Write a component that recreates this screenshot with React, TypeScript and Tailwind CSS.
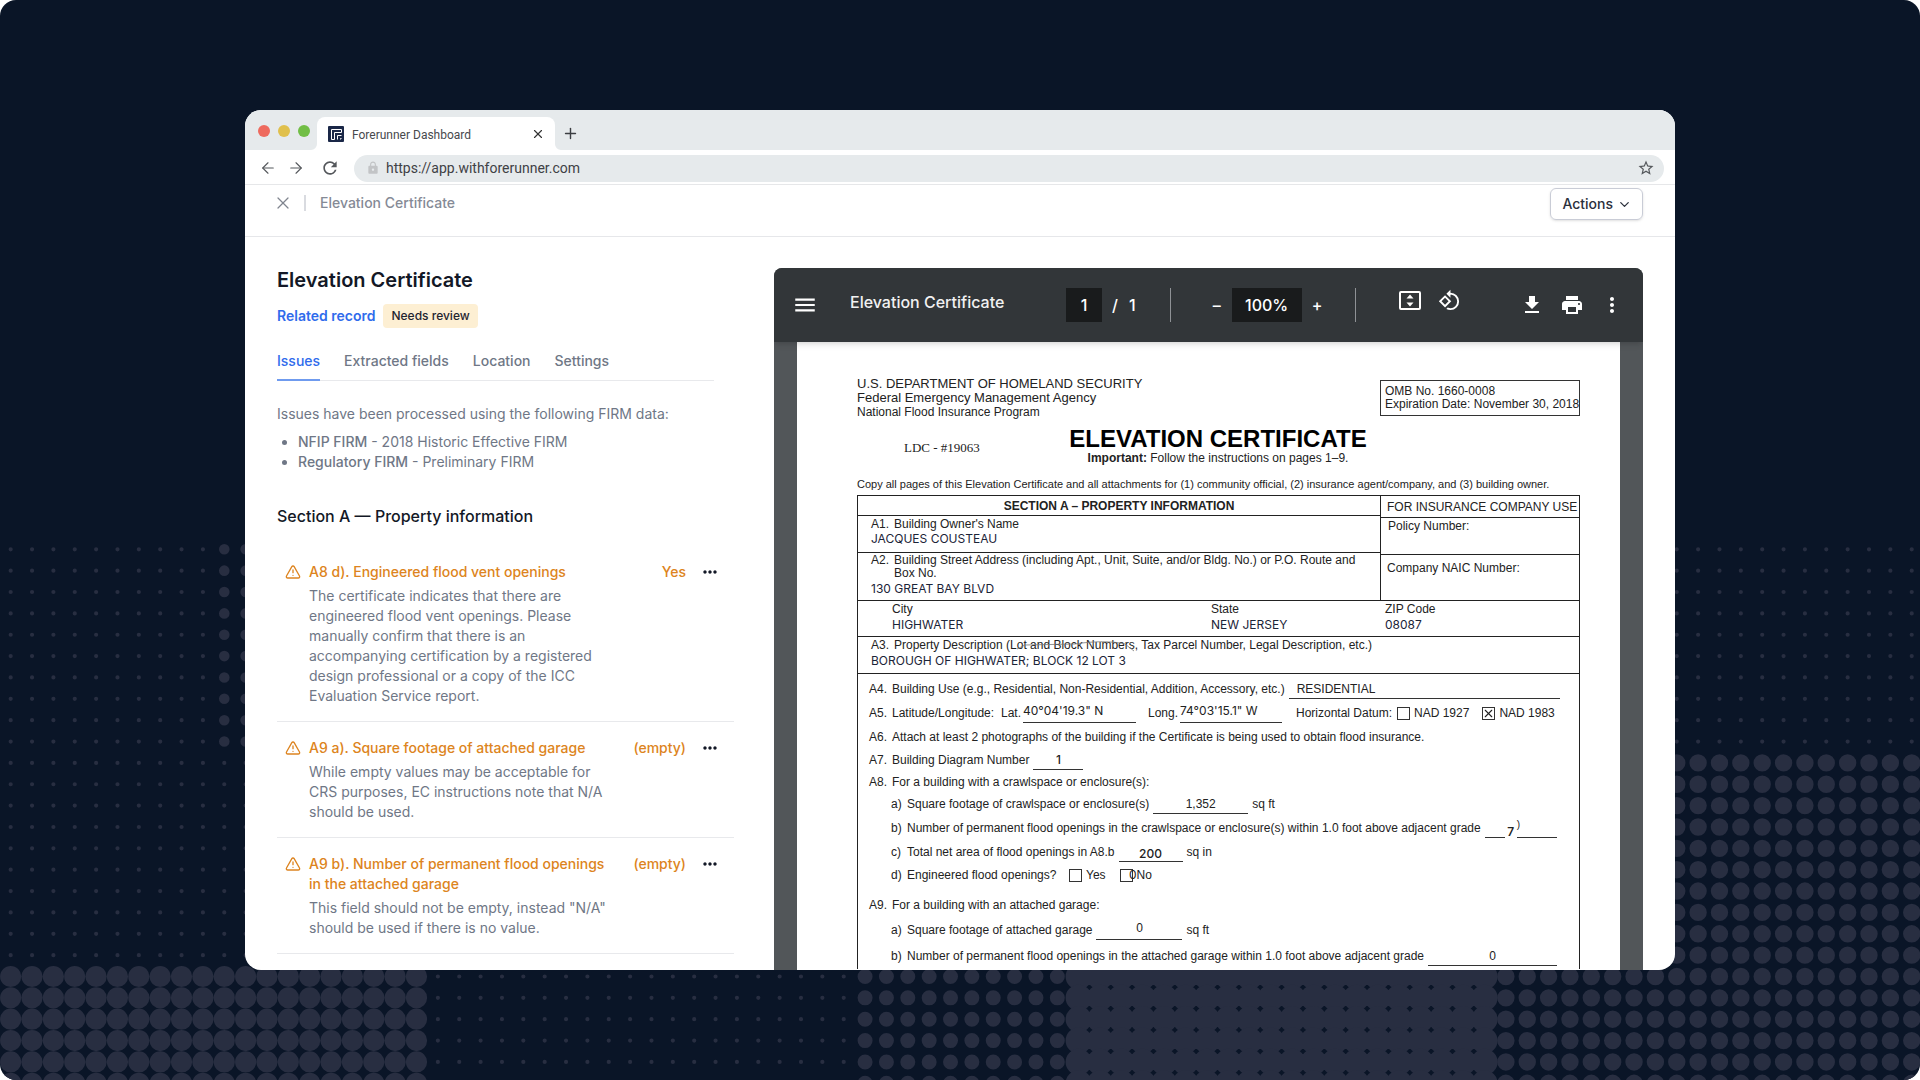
import { useState } from 'react'
import type { ReactNode } from 'react'
import { ArrowLeft, ArrowRight, ChevronDown, Plus, TriangleAlert, X } from 'lucide-react'
import { MdFileDownload, MdLock, MdMenu, MdMoreHoriz, MdMoreVert, MdPrint, MdRefresh, MdRotate90DegreesCcw, MdStarBorder } from 'react-icons/md'

const tabs = ['Issues', 'Extracted fields', 'Location', 'Settings']

const issues = [
  {
    id: 1,
    title: 'A8 d). Engineered flood vent openings',
    value: 'Yes',
    text: 'The certificate indicates that there are engineered flood vent openings. Please manually confirm that there is an accompanying certification by a registered design professional or a copy of the ICC Evaluation Service report.',
  },
  {
    id: 2,
    title: 'A9 a). Square footage of attached garage',
    value: '(empty)',
    text: 'While empty values may be acceptable for CRS purposes, EC instructions note that N/A should be used.',
  },
  {
    id: 3,
    title: 'A9 b). Number of permanent flood openings in the attached garage',
    value: '(empty)',
    text: 'This field should not be empty, instead "N/A" should be used if there is no value.',
  },
]

/* Distance between two dots of the backdrop */
const STEP = 21.36

// columns and rows are [first, count]
const dotZones = [
  { cols: [0, 10], rows: [0, 20], r: 2.1 },
  { cols: [10, 10], rows: [0, 10], r: 5.3 },
  { cols: [10, 10], rows: [10, 10], r: 2.1 },
  { cols: [70, 20], rows: [0, 10], r: 2.1 },
  { cols: [70, 20], rows: [10, 10], r: 8.7 },
  { cols: [0, 20], rows: [20, 6], r: 10.6 },
  { cols: [20, 20], rows: [20, 6], r: 2.1 },
  { cols: [40, 10], rows: [20, 6], r: 7.5 },
  { cols: [50, 20], rows: [20, 6], r: 13.1 },
  { cols: [70, 20], rows: [20, 6], r: 8.7 },
]

const Backdrop = () => (
  <svg className="absolute inset-0 h-full w-full" aria-hidden="true">
    {dotZones.map((zone, i) => (
      <g key={i} stroke="#282e41" strokeWidth={zone.r * 2} strokeLinecap="round" strokeDasharray={`0 ${STEP}`}>
        {Array.from({ length: zone.rows[1] }, (_, row) => {
          const x = STEP / 2 + zone.cols[0] * STEP
          const y = 549.3 + (zone.rows[0] + row) * STEP
          return <line key={row} x1={x} y1={y} x2={x + (zone.cols[1] - 1) * STEP + 1} y2={y} />
        })}
      </g>
    ))}
  </svg>
)

const Logo = () => (
  <svg viewBox="0 0 16 16" className="size-4" fill="none" stroke="#fff" aria-hidden="true">
    <rect width="16" height="16" rx="1" fill="#1a2747" stroke="none" />
    <path d="M6.5 13.5h-3v-10h10v3h-7v7" />
    <path d="M9.5 13.5v-4h4M12.5 13.5v-1h1" />
  </svg>
)

const FitPage = () => (
  <svg viewBox="0 0 22 19" className="h-[19px] w-[22px]" aria-hidden="true">
    <rect x="1" y="1" width="20" height="17" rx="1" fill="none" stroke="#fff" strokeWidth="2" />
    <path d="M11 3.5l3.5 4h-7zM11 15.5l3.5-4h-7z" fill="#fff" />
  </svg>
)

const BrowserBar = () => (
  <header className="font-[Roboto,sans-serif]">
    <div className="flex h-10 items-end bg-[#e6eaec] pl-[13px]">
      <div className="flex gap-2 pb-[13px]">
        <span className="size-3 rounded-full bg-[#ee6a5e]" />
        <span className="size-3 rounded-full bg-[#e0c04c]" />
        <span className="size-3 rounded-full bg-[#71be45]" />
      </div>
      <div className="relative ml-[7px] flex h-[33px] w-[238px] items-center rounded-t-lg bg-white pl-[11px] pr-[10px] text-xs text-[#47494d]">
        <svg viewBox="0 0 6 6" className="absolute -left-1.5 bottom-0 size-1.5" aria-hidden="true">
          <path d="M6 0v6H0a6 6 0 0 0 6-6z" fill="#fff" />
        </svg>
        <svg viewBox="0 0 6 6" className="absolute -right-1.5 bottom-0 size-1.5" aria-hidden="true">
          <path d="M0 0v6h6a6 6 0 0 1-6-6z" fill="#fff" />
        </svg>
        <Logo />
        <span className="ml-2 flex-1 pt-0.5">Forerunner Dashboard</span>
        <button aria-label="Close tab">
          <X className="size-[14px] text-[#333]" />
        </button>
      </div>
      <button className="mb-2 ml-[7px]" aria-label="New tab">
        <Plus className="size-[17px] text-[#3c3e42]" />
      </button>
    </div>
    <div className="flex h-[35px] items-center border-b border-[#e6e7e9] pl-[14px] pr-[11px] pt-0.5 text-[#55585c]">
      <button aria-label="Back"><ArrowLeft className="size-[18px]" strokeWidth={1.5} /></button>
      <button aria-label="Forward" className="ml-[10px]"><ArrowRight className="size-[18px]" strokeWidth={1.5} /></button>
      <button aria-label="Reload" className="ml-[15px]"><MdRefresh className="size-5" /></button>
      <div className="ml-[14px] flex h-[27px] flex-1 items-center rounded-full bg-[#e6eaec] pl-3 pr-[9px]">
        <MdLock className="size-[14px] text-[#c2c4c6]" />
        <input aria-label="Address" className="ml-1.5 flex-1 text-sm text-[#3f4145] outline-none" defaultValue="https://app.withforerunner.com" />
        <button aria-label="Bookmark"><MdStarBorder className="size-[18px]" /></button>
      </div>
    </div>
  </header>
)

const PageHeader = () => (
  <div className="flex h-[52px] items-start justify-between border-b border-[#e6e7ea] pl-[28px] pr-8 pt-[3px]">
    <div className="flex h-[30px] items-center">
      <button aria-label="Close"><X className="size-5 text-[#80858f]" strokeWidth={1.5} /></button>
      <span className="ml-[11px] h-4 w-0.5 bg-[#d9dbe0]" />
      <span className="ml-[14px] text-sm font-medium text-[#858a96]">Elevation Certificate</span>
    </div>
    <button className="flex h-8 items-center gap-1 rounded-md border border-[#c9ccd6] pl-[11px] pr-[10px] text-sm font-medium text-[#2b303c] shadow-sm">
      Actions
      <ChevronDown className="size-[15px]" />
    </button>
  </div>
)

const IssuesPanel = () => {
  const [activeTab, setActiveTab] = useState('Issues')

  return (
    <section className="w-[457px] shrink-0 pt-[29px] text-sm text-[#6f7786]">
      <h1 className="text-xl font-semibold leading-7 text-[#131826]">Elevation Certificate</h1>
      <div className="mt-[10px] flex items-center gap-2">
        <a href="#record" className="font-semibold text-[#2f6bec]">Related record</a>
        <span className="flex h-6 items-center rounded bg-[#fdefd3] px-2 text-xs font-medium text-[#1f2430]">Needs review</span>
      </div>
      <div role="tablist" className="mr-5 mt-[23px] flex gap-6 border-b border-[#e8e9ec]">
        {tabs.map((tab) => (
          <button
            key={tab}
            role="tab"
            aria-selected={tab === activeTab}
            onClick={() => setActiveTab(tab)}
            className={tab === activeTab ? '-mb-px border-b-2 border-[#6f9bef] pb-2 font-medium text-[#2f6bec]' : '-mb-px border-b-2 border-transparent pb-2 font-medium'}
          >
            {tab}
          </button>
        ))}
      </div>
      <p className="mt-[23px]">Issues have been processed using the following FIRM data:</p>
      <ul className="mt-2 list-disc pl-[21px]">
        <li><b className="font-medium">NFIP FIRM</b> - 2018 Historic Effective FIRM</li>
        <li><b className="font-medium">Regulatory FIRM</b> - Preliminary FIRM</li>
      </ul>
      <h2 className="mt-8 text-base font-medium text-[#131826]">Section A — Property information</h2>
      <ul className="mt-[18px]">
        {issues.map(({ id, title, value, text }) => (
          <li key={id} className="flex items-start border-b border-[#e8e9ec] pb-[15px] pl-2 pt-4">
            <TriangleAlert className="mt-0.5 size-4 shrink-0 text-[#dd8420]" />
            <div className="ml-2 w-[304px]">
              <h3 className="font-medium text-[#dd8420]">{title}</h3>
              <p className="mt-1">{text}</p>
            </div>
            <span className="ml-auto font-medium text-[#dd8420]">{value}</span>
            <button className="mx-[14px] text-[#131826]" aria-label="Issue actions">
              <MdMoreHoriz className="size-5" />
            </button>
          </li>
        ))}
      </ul>
    </section>
  )
}

const ViewerToolbar = () => (
  <div className="relative flex h-[74px] items-center bg-[#323639] pl-[18px] pr-[19px] text-base font-medium text-white shadow-md">
    <div className="flex w-[274px] items-center">
      <button aria-label="Menu"><MdMenu className="size-[26px]" /></button>
      <h2 className="ml-8 pb-1.5 text-[#f1f1f1]">Elevation Certificate</h2>
    </div>
    <input aria-label="Page" className="h-[34px] w-9 bg-[#191b1c] text-center" defaultValue="1" />
    <span className="ml-[10px] w-[17px]">/</span>
    <span>1</span>
    <span className="ml-[34px] h-[34px] w-px bg-[#8f9296]" />
    <button className="ml-[42px]" aria-label="Zoom out">–</button>
    <input aria-label="Zoom" className="ml-[11px] h-[34px] w-[70px] bg-[#191b1c] text-center" defaultValue="100%" />
    <button className="ml-[10px]" aria-label="Zoom in">+</button>
    <span className="ml-[33px] h-[34px] w-px bg-[#8f9296]" />
    <div className="ml-[43px] flex items-center gap-[17px] pb-[10px]">
      <button aria-label="Fit to page"><FitPage /></button>
      <button aria-label="Rotate"><MdRotate90DegreesCcw className="size-[23px]" /></button>
    </div>
    <div className="ml-auto flex items-center gap-4">
      <button aria-label="Download"><MdFileDownload className="size-6" /></button>
      <button aria-label="Print"><MdPrint className="size-6" /></button>
      <button aria-label="More"><MdMoreVert className="size-6" /></button>
    </div>
  </div>
)

/* Typed value placed over the scanned form */
const Typed = ({ children }: { children: ReactNode }) => (
  <p className="font-[Inter,sans-serif] text-xs leading-4 text-[#1b2438]">{children}</p>
)

const Line = ({ no, className = 'h-6', children }: { no: string; className?: string; children: ReactNode }) => (
  <div className={`flex items-center whitespace-nowrap ${className}`}>
    <span className="w-[23px] shrink-0">{no}</span>
    {children}
  </div>
)

const SubLine = ({ no, className, children }: { no: string; className: string; children: ReactNode }) => (
  <div className={`flex items-center whitespace-nowrap pl-[22px] ${className}`}>
    <span className="w-4 shrink-0">{no}</span>
    {children}
  </div>
)

const Blank = ({ className, children }: { className: string; children?: ReactNode }) => (
  <span className={`h-5 border-b border-[#333] ${className}`}>{children}</span>
)

const Tick = ({ label, checked = false }: { label: string; checked?: boolean }) => (
  <label className="flex items-center gap-1">
    <span className="relative size-[13px]">
      <input type="checkbox" defaultChecked={checked} className="peer block size-[13px] appearance-none border border-[#333]" />
      <X className="absolute inset-0 hidden size-[13px] peer-checked:block" />
    </span>
    {label}
  </label>
)

const Certificate = () => (
  <article className="min-h-full bg-white pl-[60px] pr-[40px] pt-[35px] font-['Liberation_Sans',Arial,sans-serif] text-xs text-[#222]">
    <div className="flex items-start justify-between">
      <div>
        <p className="text-[13px] leading-[14px]">U.S. DEPARTMENT OF HOMELAND SECURITY</p>
        <p className="text-[13px] leading-[14px]">Federal Emergency Management Agency</p>
        <p className="leading-[14px]">National Flood Insurance Program</p>
      </div>
      <div className="mt-[3px] h-9 w-[200px] whitespace-nowrap border border-[#333] pl-[4px] pt-1 leading-[13px]">
        <p>OMB No. 1660-0008</p>
        <p>Expiration Date: November 30, 2018</p>
      </div>
    </div>
    <div className="mt-2 flex">
      <p className="w-[215px] pl-[47px] pt-[13px] font-['Liberation_Serif',serif] text-[13px] leading-4">LDC - #19063</p>
      <div className="w-[292px] whitespace-nowrap text-center">
        <h3 className="-mx-2 text-2xl font-bold leading-6 text-black">ELEVATION CERTIFICATE</h3>
        <p className="leading-[14px]"><b>Important:</b> Follow the instructions on pages 1–9.</p>
      </div>
    </div>
    <p className="mt-[11px] whitespace-nowrap text-[11px] leading-4">
      Copy all pages of this Elevation Certificate and all attachments for (1) community official, (2) insurance agent/company, and (3) building owner.
    </p>

    <div className="mt-[3px] border-x border-t border-[#222]">
      <div className="flex">
        <div className="flex-1">
          <h4 className="h-5 border-b border-[#222] text-center font-bold leading-5">SECTION A – PROPERTY INFORMATION</h4>
          <div className="h-[37px] border-b border-[#222] pl-[13px] leading-[14px]">
            <Line no="A1." className="h-[15px]">Building Owner's Name</Line>
            <Typed>JACQUES COUSTEAU</Typed>
          </div>
          <div className="h-[47px] pl-[13px]">
            <Line no="A2." className="h-[14px]">Building Street Address (including Apt., Unit, Suite, and/or Bldg. No.) or P.O. Route and</Line>
            <p className="pl-[23px] leading-3">Box No.</p>
            <div className="mt-0.5"><Typed>130 GREAT BAY BLVD</Typed></div>
          </div>
        </div>
        <div className="w-[199px] whitespace-nowrap border-l border-[#222]">
          <h4 className="h-[22px] border-b border-[#222] pl-[6px] leading-[22px]">FOR INSURANCE COMPANY USE</h4>
          <p className="h-[37px] border-b border-[#222] pl-[7px] leading-4">Policy Number:</p>
          <p className="pl-[6px] pt-[5px] leading-4">Company NAIC Number:</p>
        </div>
      </div>
      <div className="flex h-[37px] border-y border-[#222] pl-[34px] leading-4">
        <div className="w-[319px]"><p>City</p><Typed>HIGHWATER</Typed></div>
        <div className="w-[174px]"><p>State</p><Typed>NEW JERSEY</Typed></div>
        <div><p>ZIP Code</p><Typed>08087</Typed></div>
      </div>
      <div className="relative h-[37px] border-b border-[#222] pl-[13px]">
        <Line no="A3." className="h-4">Property Description (Lot and Block Numbers, Tax Parcel Number, Legal Description, etc.)</Line>
        <Typed>BOROUGH OF HIGHWATER; BLOCK 12 LOT 3</Typed>
        {/* pen mark of the scan */}
        <svg viewBox="0 0 120 14" className="absolute left-[158px] top-[3px] h-[14px] w-[120px]" fill="none" stroke="#777" aria-hidden="true">
          <path d="M1 9l8-4 50-1c18-3 38-3 50 0l9 7" strokeWidth="0.8" />
        </svg>
      </div>
      <div className="pl-[11px] pt-[3px]">
        <Line no="A4.">
          Building Use (e.g., Residential, Non-Residential, Addition, Accessory, etc.)
          <Blank className="ml-1 mr-[19px] flex-1 pl-2 pt-0.5">RESIDENTIAL</Blank>
        </Line>
        <Line no="A5.">
          <span className="w-[109px]">Latitude/Longitude:</span>
          <span className="w-[22px]">Lat.</span>
          <Blank className="w-[113px] font-[Inter,sans-serif]">40°04'19.3" N</Blank>
          <span className="ml-3 w-8">Long.</span>
          <Blank className="w-[102px] font-[Inter,sans-serif]">74°03'15.1" W</Blank>
          <span className="ml-[14px] w-[101px]">Horizontal Datum:</span>
          <div className="flex gap-[13px]">
            <Tick label="NAD 1927" />
            <Tick label="NAD 1983" checked />
          </div>
        </Line>
        <Line no="A6.">Attach at least 2 photographs of the building if the Certificate is being used to obtain flood insurance.</Line>
        <Line no="A7." className="h-[22px]">
          Building Diagram Number
          <Blank className="ml-1 w-[50px] pt-0.5 text-center font-[Inter,sans-serif] font-medium">1</Blank>
        </Line>
        <Line no="A8." className="h-[22px]">For a building with a crawlspace or enclosure(s):</Line>
        <SubLine no="a)" className="h-[22px]">
          Square footage of crawlspace or enclosure(s)
          <Blank className="mx-1 w-[95px] pt-0.5 text-center">1,352</Blank>
          sq ft
        </SubLine>
        <SubLine no="b)" className="h-[26px]">
          Number of permanent flood openings in the crawlspace or enclosure(s) within 1.0 foot above adjacent grade
          <Blank className="ml-1 w-5" />
          <span className="w-3 pt-2 text-center font-[Inter,sans-serif] font-semibold">7</span>
          <Blank className="w-10 text-[10px]">)</Blank>
        </SubLine>
        <SubLine no="c)" className="h-[22px]">
          Total net area of flood openings in A8.b
          <Blank className="mx-1 w-16 pt-1 text-center font-[Inter,sans-serif] font-medium">200</Blank>
          sq in
        </SubLine>
        <SubLine no="d)" className="h-6">
          <span className="w-[162px]">Engineered flood openings?</span>
          <div className="relative flex gap-[14px]">
            <Tick label="Yes" />
            <Tick label="No" />
            <span className="absolute left-[60px] font-[Inter,sans-serif]">0</span>
          </div>
        </SubLine>
        <Line no="A9." className="mt-[6px] h-6">For a building with an attached garage:</Line>
        <SubLine no="a)" className="h-[26px]">
          Square footage of attached garage
          <Blank className="mx-1 w-[86px] text-center">0</Blank>
          sq ft
        </SubLine>
        <SubLine no="b)" className="h-[26px]">
          Number of permanent flood openings in the attached garage within 1.0 foot above adjacent grade
          <Blank className="ml-1 mr-[22px] flex-1 pt-0.5 text-center">0</Blank>
        </SubLine>
      </div>
    </div>
  </article>
)

const App = () => {
  return (
    <div className="bg-white">
      <main className="relative flex h-screen flex-col overflow-hidden rounded-2xl bg-[#0a1527] px-[245px] py-[110px] font-[Inter,sans-serif]">
        <Backdrop />
        <div className="relative flex min-h-0 flex-1 flex-col overflow-hidden rounded-2xl bg-white">
          <BrowserBar />
          <PageHeader />
          <div className="flex min-h-0 flex-1 gap-10 px-8">
            <IssuesPanel />
            <section className="mt-[31px] flex min-w-0 flex-1 flex-col overflow-hidden rounded-t-lg bg-[#525659]">
              <ViewerToolbar />
              <div className="min-h-0 flex-1 overflow-hidden px-[23px]">
                <Certificate />
              </div>
            </section>
          </div>
        </div>
      </main>
    </div>
  )
}

export default App
